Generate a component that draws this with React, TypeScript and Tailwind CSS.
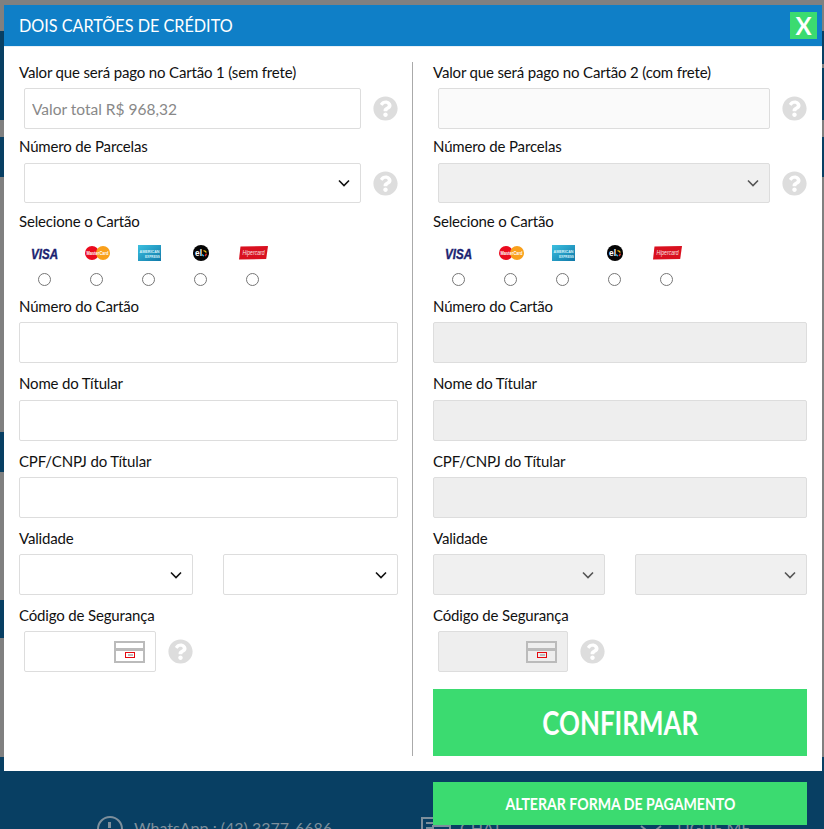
import React from 'react';
import { FaQuestionCircle } from 'react-icons/fa';

const inputBase = 'h-[41px] border border-[#ddd] rounded-[2px] outline-none';

function Label({ children, className = '' }: { children: React.ReactNode; className?: string }) {
  return <label className={`block h-[20px] leading-[18px] text-[15px] tracking-[-0.16px] text-[#111] ${className}`}>{children}</label>;
}

function Help({ className = '' }: { className?: string }) {
  return <FaQuestionCircle className={`shrink-0 ml-[12px] text-[#ddd] ${className}`} size={25} />;
}

function Select({ off, className, height = 'h-[41px]' }: { off: boolean; className: string; height?: string }) {
  return (
    <div className={`relative ${className}`}>
      <select disabled={off} className={`block w-full appearance-none border border-[#ddd] rounded-[2px] ${height} ${off ? 'bg-[#f0f0f0]' : 'bg-white'}`} />
      <svg width="12" height="8" className="absolute right-[11px] top-1/2 -translate-y-1/2" fill="none" stroke={off ? '#555' : '#111'} strokeWidth="1.6">
        <path d="M1 1.5l5 5 5-5" />
      </svg>
    </div>
  );
}

function Logos() {
  return (
    <div className="flex pl-[12px] gap-[25px] h-[16px]">
      <svg width="27" height="16" className="overflow-visible">
        <text x="0" y="13.5" textLength="27" lengthAdjust="spacingAndGlyphs" fontFamily="Liberation Sans" fontWeight="700" fontStyle="italic" fontSize="14" fill="#1a1f71" stroke="#1a1f71" strokeWidth="0.4">VISA</text>
      </svg>
      <svg width="27" height="16" className="overflow-visible">
        <circle cx="9" cy="8" r="7" fill="#eb0a1e" />
        <circle cx="20" cy="8" r="7" fill="#f9a01b" />
        <text x="3.5" y="10" textLength="22" lengthAdjust="spacingAndGlyphs" fontFamily="Liberation Sans" fontWeight="700" fontSize="6" fill="#fff">MasterCard</text>
      </svg>
      <svg width="27" height="16" className="overflow-visible">
        <defs>
          <linearGradient id="amexFill" x1="0" y1="0" x2="1" y2="1">
            <stop offset="0" stopColor="#3cc0e0" />
            <stop offset="1" stopColor="#0f78a8" />
          </linearGradient>
        </defs>
        <rect x="3" y="0" width="23" height="16" fill="url(#amexFill)" />
        <text x="4.5" y="7.5" textLength="20" lengthAdjust="spacingAndGlyphs" fontFamily="Liberation Sans" fontWeight="700" fontSize="4.2" fill="#d8f2fa">AMERICAN</text>
        <text x="10" y="13" textLength="15" lengthAdjust="spacingAndGlyphs" fontFamily="Liberation Sans" fontWeight="700" fontSize="4.2" fill="#d8f2fa">EXPRESS</text>
      </svg>
      <svg width="27" height="16" className="overflow-visible">
        <circle cx="14" cy="8" r="8" fill="#050505" />
        <text x="8" y="11" textLength="7" lengthAdjust="spacingAndGlyphs" fontFamily="Liberation Sans" fontWeight="700" fontSize="8.5" fill="#fff">el</text>
        <path d="M16.5 5.6a3 3 0 0 1 2.8 2" stroke="#f7c417" strokeWidth="1.4" fill="none" />
        <path d="M19.4 8.6a3 3 0 0 1-1.5 2.2" stroke="#e5322b" strokeWidth="1.4" fill="none" />
        <path d="M17 10.9a3 3 0 0 1-2-1.5" stroke="#2aa6df" strokeWidth="1.4" fill="none" />
      </svg>
      <svg width="27" height="16" className="overflow-visible">
        <path d="M1.5 1.5L29 1 27.2 14 0 14.5z" fill="#d9101f" />
        <text x="3.5" y="10.3" textLength="22" lengthAdjust="spacingAndGlyphs" fontFamily="Liberation Sans" fontStyle="italic" fontSize="7.6" fill="#fbe3e3">Hipercard</text>
      </svg>
    </div>
  );
}

function Radios() {
  return (
    <div className="flex pl-[12px] gap-[25px] mt-[12px] h-[13px]">
      {[0, 1, 2, 3, 4].map(i => (
        <span key={i} className="w-[27px] flex justify-center">
          <input type="radio" name="cartao" />
        </span>
      ))}
    </div>
  );
}

function CvvIcon() {
  return (
    <svg width="31" height="22" className="absolute right-[11px] top-[10px]">
      <rect x="1" y="1" width="29" height="20" fill="none" stroke="#bbb" strokeWidth="2" />
      <rect x="1" y="7" width="29" height="3" fill="#bbb" />
      <rect x="11.5" y="11.5" width="9" height="5" fill="none" stroke="#e5090f" />
      <rect x="14" y="13" width="5" height="2" fill="#bbb" />
    </svg>
  );
}

function Column({ total, numero, off, wide, splitA, splitB }: { total: string; numero: number; off: boolean; wide: string; splitA: string; splitB: string }) {
  const fill = off ? 'bg-[#eee]' : 'bg-white';
  return (
    <div className={`shrink-0 ${wide}`}>
      <Label className="mt-px">{`Valor que será pago no Cartão ${numero} (${numero === 1 ? 'sem' : 'com'} frete)`}</Label>
      <div className="flex items-center mt-[5px]">
        <input
          disabled={off}
          placeholder={total}
          className={`${inputBase} flex-1 min-w-0 ml-[5px] px-[7px] text-[15.5px] placeholder:text-[#888] ${off ? 'bg-[#fafafa]' : 'bg-white'}`}
        />
        <Help />
      </div>
      <Label className="mt-[8px]">Número de Parcelas</Label>
      <div className="flex items-center mt-[6px]">
        <Select off={off} height="h-[40px]" className="flex-1 min-w-0 ml-[5px]" />
        <Help />
      </div>
      <Label className="mt-[9px]">Selecione o Cartão</Label>
      <div className="mt-[13px]">
        <Logos />
        <Radios />
      </div>
      <Label className="mt-[11px]">Número do Cartão</Label>
      <input disabled={off} className={`${inputBase} block w-full mt-[5px] ${fill}`} />
      <Label className="mt-[11px]">Nome do Títular</Label>
      <input disabled={off} className={`${inputBase} block w-full mt-[6px] ${fill}`} />
      <Label className="mt-[11px]">CPF/CNPJ do Títular</Label>
      <input disabled={off} className={`${inputBase} block w-full mt-[5px] ${fill}`} />
      <Label className="mt-[11px]">Validade</Label>
      <div className="flex justify-between mt-[5px]">
        <Select off={off} className={splitA} />
        <Select off={off} className={splitB} />
      </div>
      <Label className="mt-[11px]">Código de Segurança</Label>
      <div className="flex items-center mt-[5px]">
        <div className="relative ml-[5px]">
          <input disabled={off} className={`${inputBase} block ${numero === 1 ? 'w-[132px]' : 'w-[130px]'} ${fill}`} />
          <CvvIcon />
        </div>
        <Help />
      </div>
      {off && (
        <button className="block w-full h-[67px] mt-[17px] bg-[#3bdb70] text-white text-[32px] font-bold">
          <span className="inline-block scale-x-[0.81]">CONFIRMAR</span>
        </button>
      )}
    </div>
  );
}

function Strip({ parts }: { parts: [number, boolean][] }) {
  return (
    <>
      {parts.map(([height, navy], i) => (
        <div key={i} className={navy ? 'bg-[#083f63]' : 'bg-[#808080]'} style={{ height }} />
      ))}
    </>
  );
}

export default function App() {
  return (
    <div className="relative h-screen w-full overflow-hidden bg-[#808080] font-['Lato',sans-serif]">
      {/* dimmed page behind the modal */}
      <div className="flex h-[757px]">
        <div className="w-[4px]">
          <Strip parts={[[31, false], [89, true], [17, false], [40, true], [255, false], [40, true], [128, false], [38, true], [119, false]]} />
        </div>
        <div className="flex-1" />
        <div className="w-[2px]">
          <Strip parts={[[31, false], [33, true], [4, false], [52, true], [17, false], [40, true], [580, false]]} />
        </div>
      </div>
      <div className="flex h-[72px] bg-[#083f63] pt-[59px] text-[#7d8f9c] text-[16px] leading-[24px]">
        <svg width="26" height="26" className="ml-[97px] shrink-0" fill="none" stroke="#7d8f9c" strokeWidth="2">
          <circle cx="13" cy="13" r="12" />
          <path d="M12.5 6v6" strokeWidth="3" />
        </svg>
        <span className="ml-[11px] w-[287px] whitespace-nowrap">WhatsApp : (43) 3377-6686</span>
        <svg width="30" height="20" className="shrink-0 mt-px" fill="none" stroke="#7d8f9c" strokeWidth="2">
          <path d="M1 14V1h16M5 6h10M5 11h8" />
          <rect x="12" y="9" width="17" height="10" />
        </svg>
        <span className="ml-[9px] w-[180px] whitespace-nowrap">CHAT</span>
        <svg width="22" height="12" className="shrink-0 mt-[9px] mr-[15px]" fill="none" stroke="#7d8f9c" strokeWidth="2">
          <path d="M1 1l10 8 10-8" />
        </svg>
        <span className="whitespace-nowrap">LIGUE ME</span>
      </div>

      {/* modal */}
      <div className="absolute left-[4px] top-[5px] w-[818px] h-[766px] bg-white">
        <div className="flex items-center justify-between h-[41px] bg-[#0f7fc7] border-b border-[#e8f0f6] box-content pl-[15px] pr-[5px] -mb-px">
          <h2 className="text-[18px] text-white uppercase origin-left scale-x-[0.9]">Dois cartões de crédito</h2>
          <button className="w-[27px] h-[27px] bg-[#3bdb70] text-white text-[24px] leading-[27px] font-bold">X</button>
        </div>
        <div className="flex pl-[15px] pt-[16px]">
          <Column total="Valor total R$ 968,32" numero={1} off={false} wide="w-[379px]" splitA="w-[174px]" splitB="w-[175px]" />
          <div className="shrink-0 w-px h-[694px] ml-[14px] mr-[20px] bg-[#aaa]" />
          <Column total="" numero={2} off wide="w-[374px]" splitA="w-[172px]" splitB="w-[172px]" />
        </div>
      </div>

      <button className="absolute left-[433px] top-[782px] w-[374px] h-[43px] bg-[#3bdb70] text-white text-[17px] font-bold">
        <span className="inline-block scale-x-[0.83]">ALTERAR FORMA DE PAGAMENTO</span>
      </button>
    </div>
  );
}
